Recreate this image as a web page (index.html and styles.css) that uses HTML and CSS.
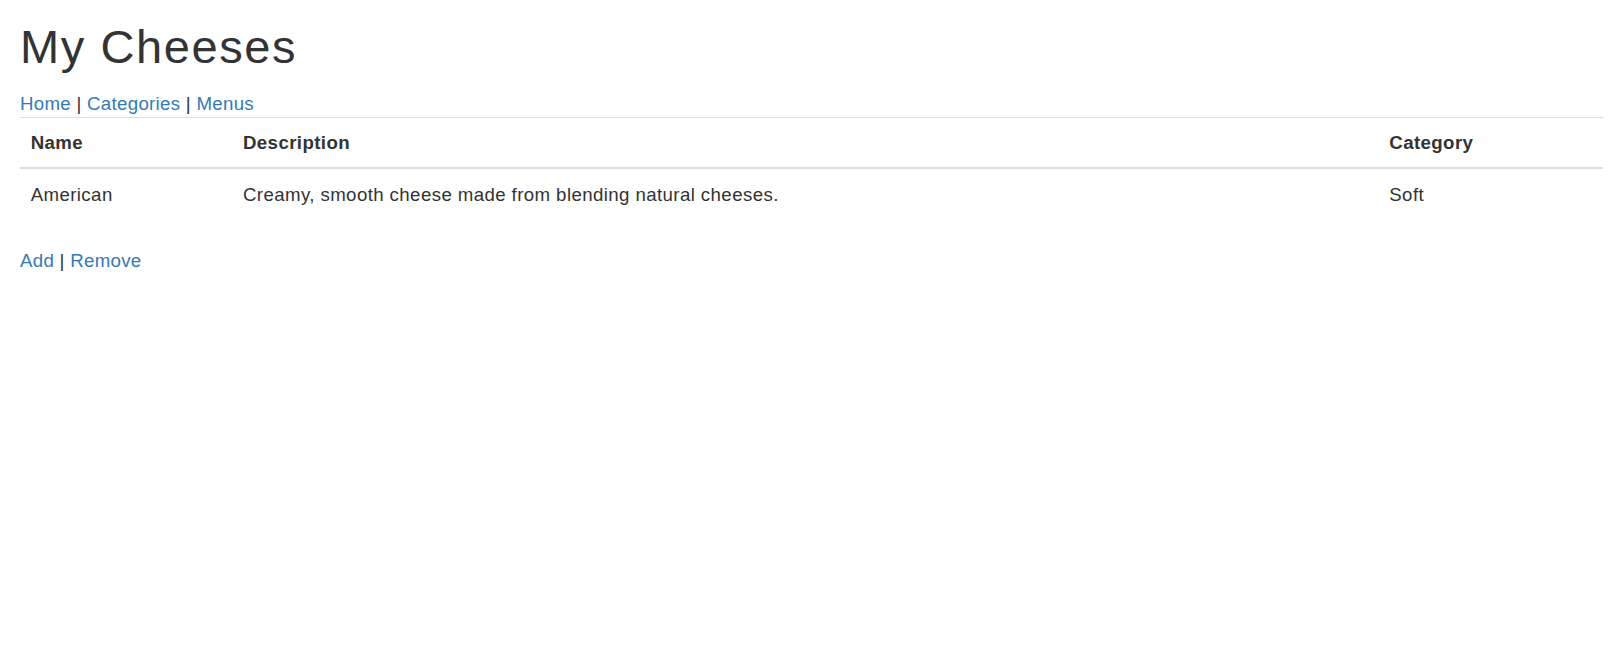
FILE: index.html
```html
<!DOCTYPE html>
<html>
<head>
<meta charset="utf-8">
<title>My Cheeses</title>
<link rel="stylesheet" href="styles.css">
</head>
<body>
<div class="page">
  <h1 class="title">My Cheeses</h1>
  <nav class="nav">
    <a href="#">Home</a> | <a href="#">Categories</a> | <a href="#">Menus</a>
  </nav>
  <table class="table">
    <thead>
      <tr>
        <th class="col-name">Name</th>
        <th class="col-desc">Description</th>
        <th class="col-cat">Category</th>
      </tr>
    </thead>
    <tbody>
      <tr>
        <td>American</td>
        <td>Creamy, smooth cheese made from blending natural cheeses.</td>
        <td>Soft</td>
      </tr>
    </tbody>
  </table>
  <div class="actions">
    <a href="#">Add</a> | <a href="#">Remove</a>
  </div>
</div>
</body>
</html>
```

FILE: styles.css
```css
html, body {
  margin: 0;
  padding: 0;
  background: #fff;
}
body {
  font-family: "Liberation Sans", Arial, Helvetica, sans-serif;
  font-size: 18.67px;
  line-height: 26.67px;
  color: #333;
}
.page {
  padding: 0 11px 0 20px;
}
.title {
  margin: 19px 0 0 0;
  font-size: 47px;
  line-height: 56px;
  font-weight: 500;
  letter-spacing: 1.6px;
  color: #333;
}
a {
  color: #337ab7;
  text-decoration: none;
}
.nav {
  margin-top: 16px;
  line-height: 26px;
  height: 21px;
  overflow: visible;
  letter-spacing: 0.3px;
}
.table {
  width: 100%;
  border-collapse: collapse;
  border-top: 1px solid #ddd;
  margin-top: 5px;
  letter-spacing: 0.4px;
}
.table th,
.table td {
  text-align: left;
  vertical-align: top;
  padding: 11px 10.67px 11px 10.67px;
  line-height: 26.67px;
}
.table th {
  font-weight: bold;
  border-bottom: 2px solid #ddd;
  padding-top: 12px;
  padding-bottom: 10px;
}
.table td {
  padding-top: 13px;
  padding-bottom: 9px;
}
.col-name { width: 191px; }
.col-desc { width: 1125px; }
.actions {
  margin-top: 31px;
  letter-spacing: 0.3px;
}
```
